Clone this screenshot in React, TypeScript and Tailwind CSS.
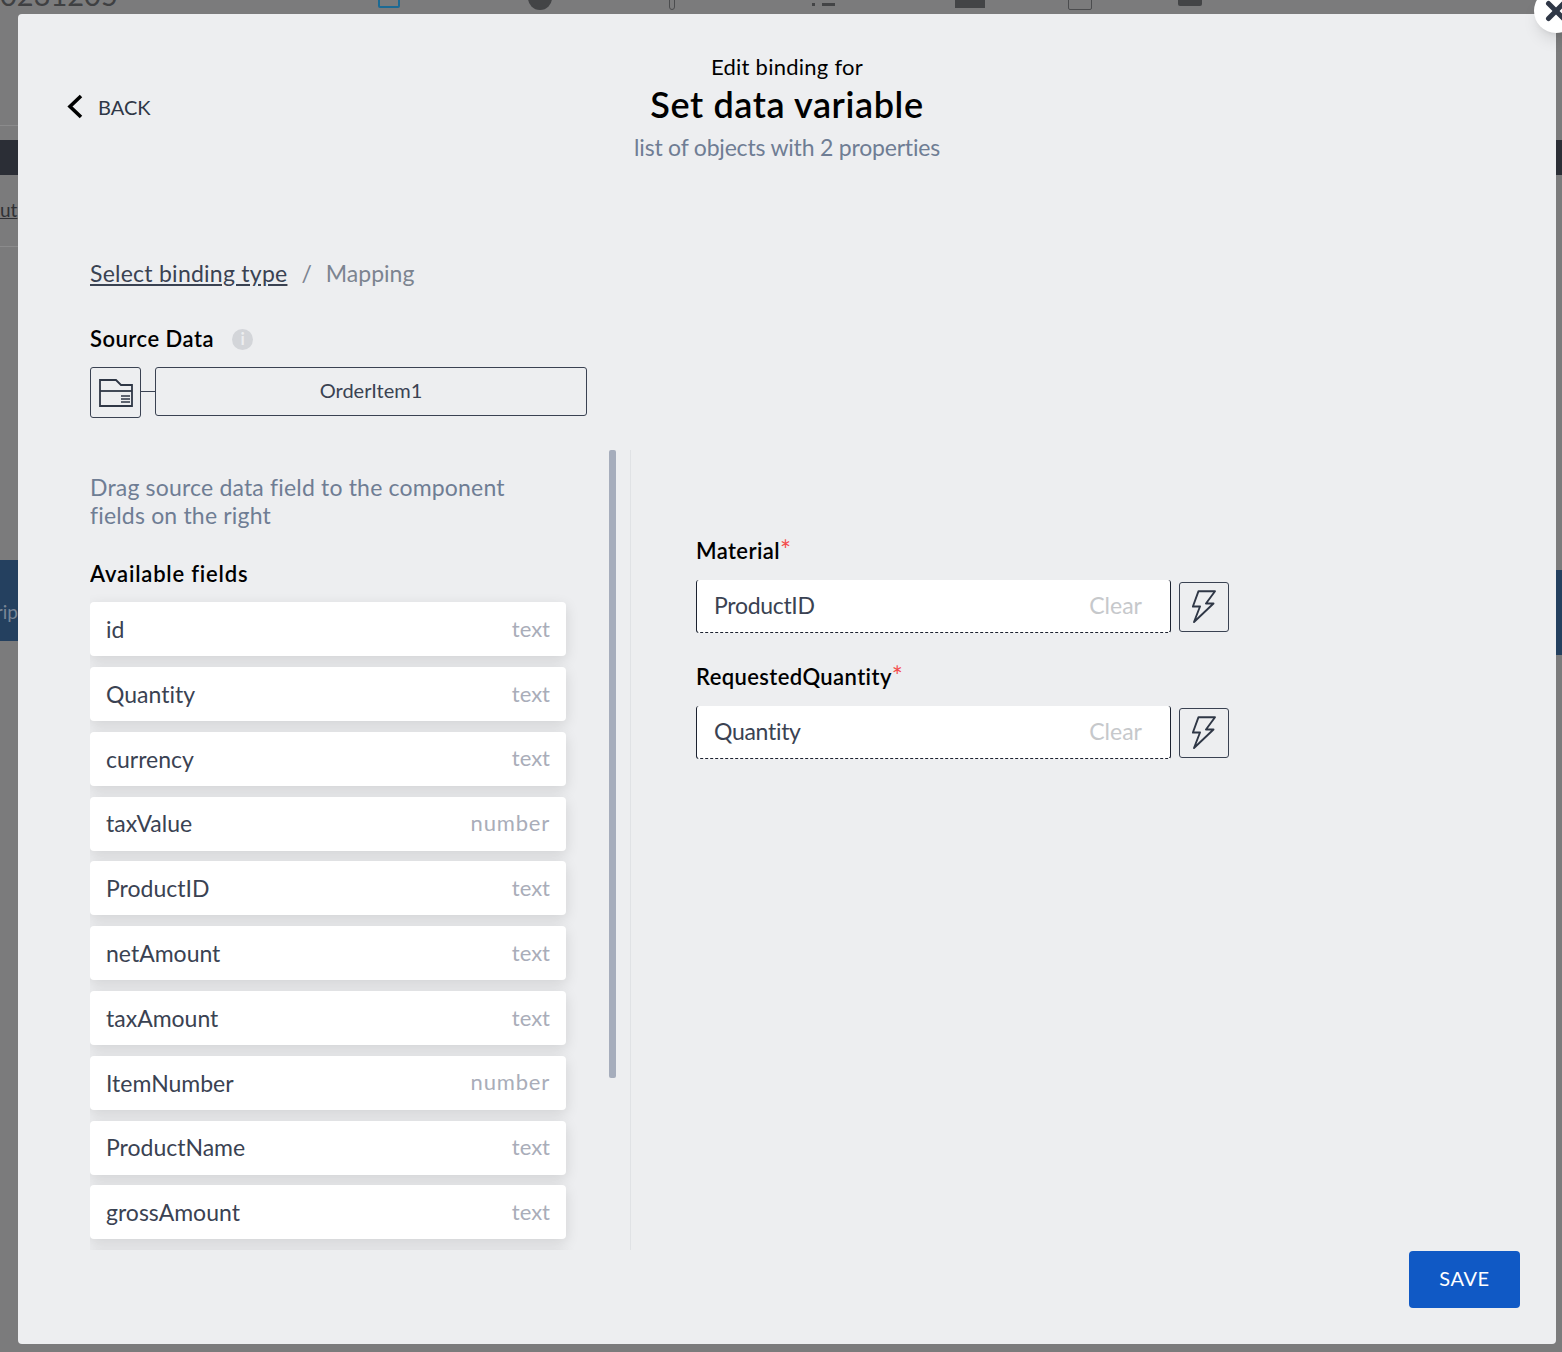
import { X } from "lucide-react";

const FIELDS = [
  { name: "id", type: "text" },
  { name: "Quantity", type: "text" },
  { name: "currency", type: "text" },
  { name: "taxValue", type: "number" },
  { name: "ProductID", type: "text" },
  { name: "netAmount", type: "text" },
  { name: "taxAmount", type: "text" },
  { name: "ItemNumber", type: "number" },
  { name: "ProductName", type: "text" },
  { name: "grossAmount", type: "text" },
  { name: "", type: "" },
];

function BoltIcon() {
  return (
    <svg width="24" height="33" viewBox="0 0 24 33" fill="none" stroke="#2f3746" strokeWidth="1.9" strokeLinejoin="round">
      <path d="M6.5 1.2H23L14 13.5h7.5L2 32l6-15.5H.9z" />
    </svg>
  );
}

function FolderIcon() {
  return (
    <svg width="34" height="28" viewBox="0 0 34 28" fill="none" stroke="#2f3746" strokeWidth="1.8">
      <path d="M1 27V1h16l5 5h11v21z" />
      <path d="M1 12h32" />
      <path d="M22 17h9M22 20h9M22 23h9" strokeWidth="1.3" />
    </svg>
  );
}

function BindingField({ label, value }: { label: string; value: string }) {
  return (
    <div className="flex flex-col">
      <div className="-mt-[2px] h-[27px] text-[22px] leading-[27px] font-semibold tracking-[0.4px] text-black">
        {label}
        <span className="relative top-[1px] text-[26px] leading-none font-normal text-[#f44b4b]">*</span>
      </div>
      <div className="mt-[17px] flex items-center gap-2">
        <div className="flex h-[53px] w-[475px] items-center justify-between rounded-[3px] border-x border-b border-[#1c2230] [border-bottom-style:dashed] bg-white pb-[1px] pl-[17px] pr-[28px]">
          <span className="text-[23px] tracking-[-0.3px] text-[#3a4252]">{value}</span>
          <span className="text-[23px] text-[#c6c8cb]">Clear</span>
        </div>
        <div className="flex h-[50px] w-[50px] items-center justify-center rounded-[3px] border border-[#3a4252]">
          <BoltIcon />
        </div>
      </div>
    </div>
  );
}

export default function App() {
  return (
    <div className="relative flex h-[1352px] w-[1562px] flex-col overflow-hidden bg-[#7b7b7c] font-['Lato',sans-serif] [font-variant-ligatures:none]">
      {/* page behind the dimmed overlay */}
      <div className="flex h-[14px] items-start overflow-hidden">
        <span className="-mt-[21px] w-[378px] text-[29px] leading-[31px] text-[#3f4042]">0231205</span>
        <div className="-mt-[12px] h-[20px] w-[22px] rounded-[2px] border-2 border-[#1c6a94]" />
        <div className="-mt-[14px] ml-[128px] h-[24px] w-[24px] rounded-full bg-[#434446]" />
        <div className="-mt-[4px] ml-[117px] h-[14px] w-[6px] rounded-b-full border border-[#4b4c4e]" />
        <div className="mt-[3px] ml-[137px] h-[3px] w-[3px] bg-[#434446]" />
        <div className="mt-[3px] ml-[7px] h-[3px] w-[13px] bg-[#434446]" />
        <div className="-mt-[4px] ml-[120px] h-[12px] w-[30px] bg-[#434446]" />
        <div className="-mt-[4px] ml-[83px] h-[14px] w-[24px] rounded-[2px] border border-[#4b4c4e]" />
        <div className="-mt-[4px] ml-[86px] h-[10px] w-[24px] rounded-[2px] bg-[#434446]" />
      </div>
      <div className="flex flex-1 justify-between">
        <div className="flex w-[18px] flex-col overflow-hidden">
          <div className="mt-[111px] h-px bg-[#8b8b8c]" />
          <div className="mt-[14px] h-[35px] bg-[#2b2e36]" />
          <div className="mt-[24px] text-[19px] leading-[22px] text-[#2f3034] underline">ut</div>
          <div className="mt-[25px] h-px bg-[#8b8b8c]" />
          <div className="mt-[313px] flex h-[81px] items-center justify-end bg-[#24405f] pt-[24px] text-[19px] text-[#7a8696]">
            rip
          </div>
        </div>
        <div className="flex w-[6px] flex-col">
          <div className="mt-[126px] h-[35px] bg-[#2b2e36]" />
          <div className="mt-[395px] h-[85px] bg-[#24405f]" />
        </div>
      </div>

      {/* modal */}
      <div className="absolute left-[18px] top-[14px] flex h-[1330px] w-[1538px] flex-col rounded-[4px] bg-[#edeef0]">
        <button className="absolute -right-[22px] -top-[25px] flex h-[44px] w-[44px] items-center justify-center rounded-full bg-white shadow-lg">
          <X size={30} strokeWidth={4} className="text-[#2f3746]" />
        </button>

        <header className="grid grid-cols-[1fr_auto_1fr] items-center px-[48px] pt-[39px]">
          <div className="mb-[2px] flex items-center gap-[15px]">
            <svg width="17" height="25" viewBox="0 0 17 25" fill="none" stroke="#000" strokeWidth="3.6">
              <path d="M15 2 4 12.5 15 23" />
            </svg>
            <span className="text-[20px] text-[#2f3746]">BACK</span>
          </div>
          <div className="text-center">
            <div className="text-[22px] leading-[28px] tracking-[0.25px] text-black">Edit binding for</div>
            <h1 className="mt-[1px] text-[36px] leading-[44px] font-semibold tracking-[0.6px] text-black">Set data variable</h1>
            <div className="mt-[6px] text-[23px] leading-[30px] tracking-[-0.2px] text-[#6f7d94]">list of objects with 2 properties</div>
          </div>
          <div />
        </header>

        <div className="flex flex-1 flex-col overflow-hidden px-[72px] pt-[96px]">
          <div className="flex items-center gap-[14px] text-[23px] leading-[30px]">
            <span className="tracking-[0.25px] text-[#3a4252] underline">Select binding type</span>
            <span className="text-[#7c8490]">/</span>
            <span className="text-[#7c8490]">Mapping</span>
          </div>

          <div className="mt-[36px] flex items-center gap-[18px]">
            <span className="text-[22px] leading-[30px] font-semibold tracking-[0.5px] text-black">Source Data</span>
            <span className="flex h-[21px] w-[21px] items-center justify-center rounded-full bg-[#d3d5d9] text-[17px] font-bold text-[#edeef0]">i</span>
          </div>

          <div className="mt-[13px] flex items-start">
            <div className="flex h-[51px] w-[51px] items-center justify-center rounded-[3px] border border-[#3a4252]">
              <FolderIcon />
            </div>
            <div className="mt-[24px] h-px w-[14px] bg-[#3a4252]" />
            <div className="flex h-[49px] w-[432px] items-center justify-center rounded-[3px] border border-[#3a4252] pb-[3px] text-[20px] text-[#3a4252]">
              OrderItem1
            </div>
          </div>

          <div className="mt-[32px] flex min-h-0 flex-1">
            <div className="flex h-[800px] w-[541px] overflow-hidden border-r border-[#e0e2e5]">
              <div className="w-[476px] shrink-0">
                <p className="mt-[23px] text-[23px] leading-[28px] tracking-[0.18px] text-[#6f7d94]">
                  Drag source data field to the component
                  <br />
                  fields on the right
                </p>
                <h2 className="mt-[31px] text-[22px] leading-[28px] font-semibold tracking-[0.8px] text-black">Available fields</h2>
                <ul className="mt-[14.3px] flex flex-col gap-[10.8px]">
                  {FIELDS.map((f, i) => (
                    <li
                      key={i}
                      className="flex h-[54px] shrink-0 items-center justify-between rounded-[4px] bg-white pl-4 pr-4 shadow-[0_4px_14px_rgba(0,0,0,0.12)]"
                    >
                      <span className="text-[23px] text-[#3a4252]">{f.name}</span>
                      <span className={f.type === "number" ? "-mt-[2px] text-[22px] tracking-[0.8px] text-[#a9adb9]" : "-mt-[2px] text-[22px] text-[#a9adb9]"}>{f.type}</span>
                    </li>
                  ))}
                </ul>
              </div>
              <div className="ml-[43px] h-[628px] w-[7px] shrink-0 rounded-[2px] bg-[#a6adbc]" />
            </div>
            <div className="flex flex-col gap-[31px] pl-[65px] pt-[88px]">
              <BindingField label="Material" value="ProductID" />
              <BindingField label="RequestedQuantity" value="Quantity" />
            </div>
          </div>
        </div>

        <footer className="flex justify-end pb-[36px] pr-[36px]">
          <button className="h-[57px] w-[111px] rounded-[4px] bg-[#1059c5] pb-[3px] text-[20px] tracking-[0.6px] text-white">SAVE</button>
        </footer>
      </div>
    </div>
  );
}
